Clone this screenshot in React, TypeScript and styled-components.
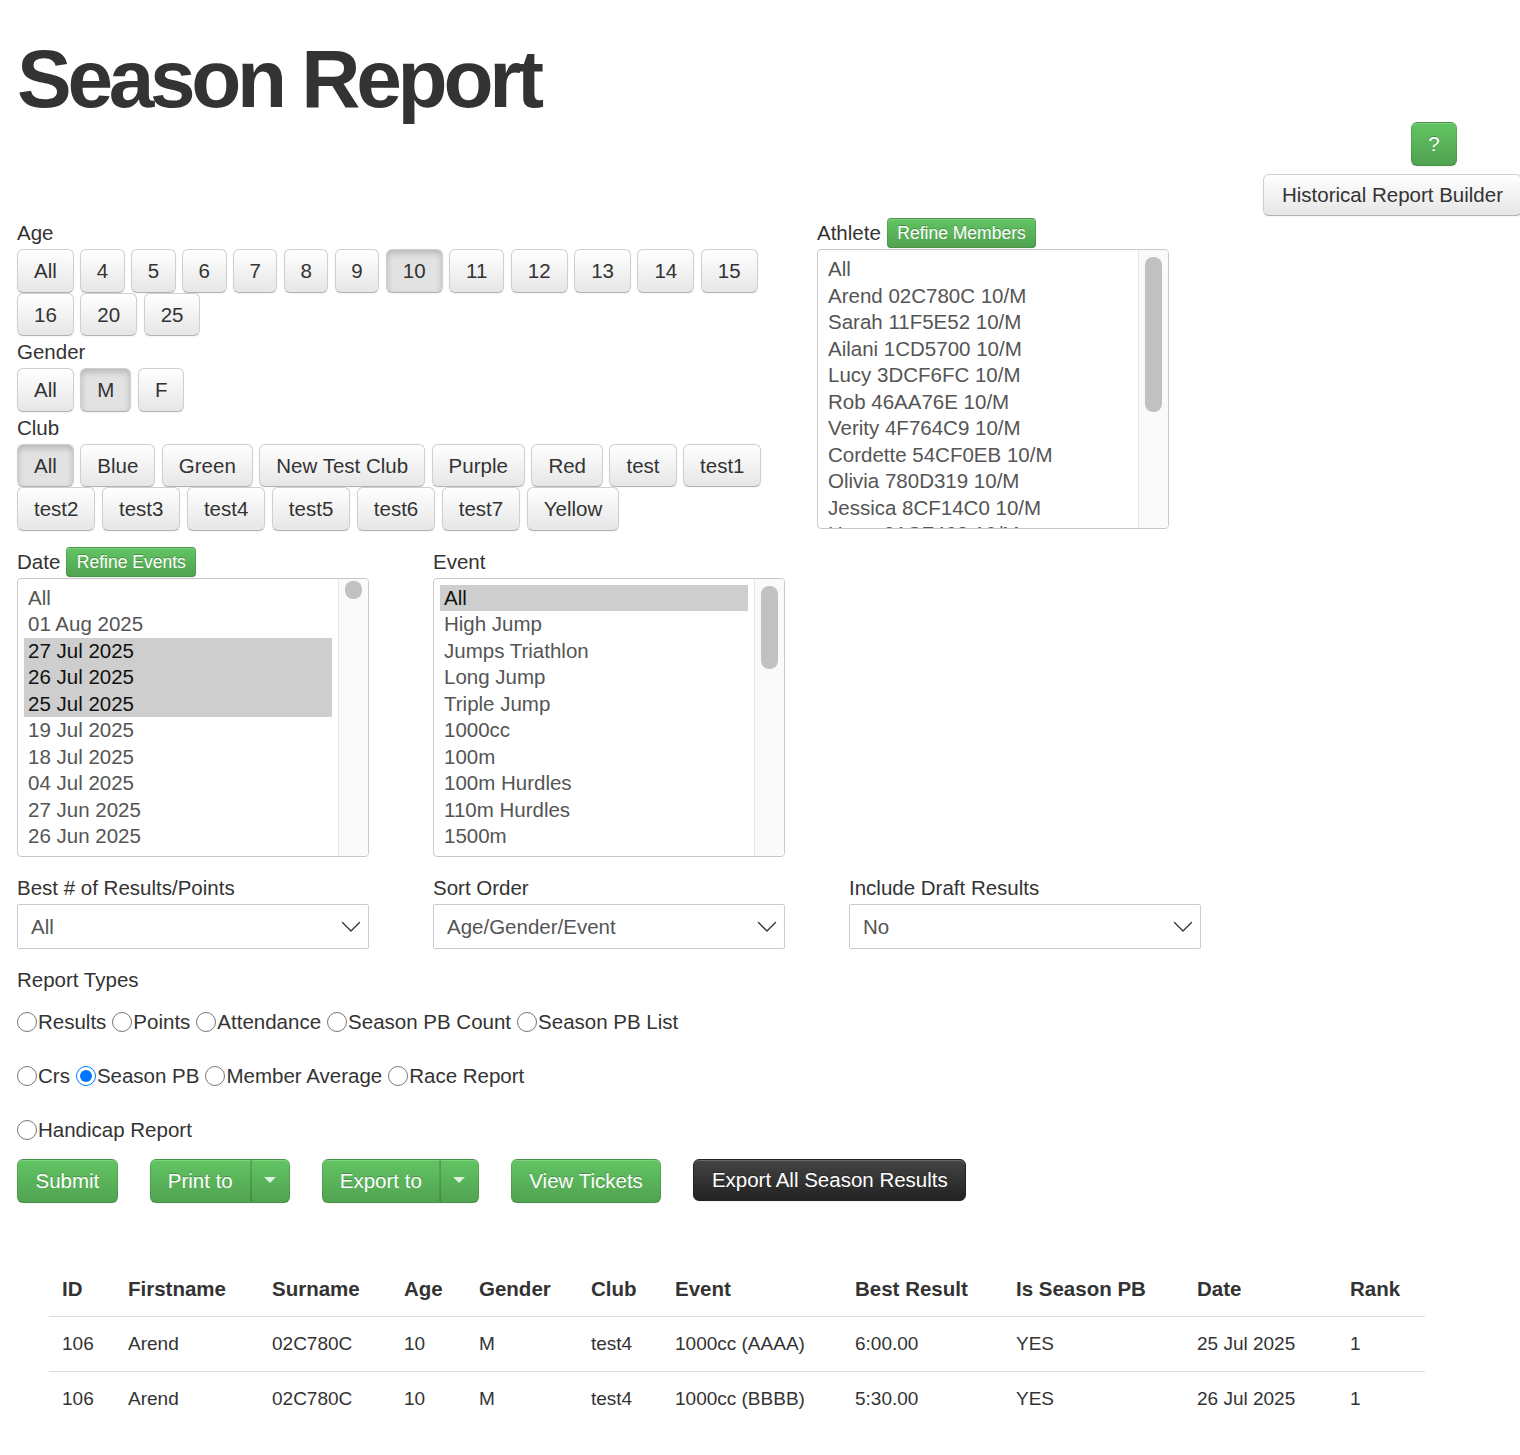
import React from "react";
import styled, { createGlobalStyle, css } from "styled-components";

const GlobalStyle = createGlobalStyle`
  html, body {
    margin: 0;
    padding: 0;
    background: #fff;
    overflow-x: hidden;
  }
  body {
    font-family: "Liberation Sans", Arial, Helvetica, sans-serif;
    font-size: 20.5px;
    color: #333;
  }
  * { box-sizing: border-box; }
`;

const ages = ["All", "4", "5", "6", "7", "8", "9", "10", "11", "12", "13", "14", "15", "16", "20", "25"];
const genders = ["All", "M", "F"];
const clubs = ["All", "Blue", "Green", "New Test Club", "Purple", "Red", "test", "test1", "test2", "test3", "test4", "test5", "test6", "test7", "Yellow"];

const athletes = [
  "All",
  "Arend 02C780C 10/M",
  "Sarah 11F5E52 10/M",
  "Ailani 1CD5700 10/M",
  "Lucy 3DCF6FC 10/M",
  "Rob 46AA76E 10/M",
  "Verity 4F764C9 10/M",
  "Cordette 54CF0EB 10/M",
  "Olivia 780D319 10/M",
  "Jessica 8CF14C0 10/M",
  "Harry 91CF468 10/M",
];

const dates = ["All", "01 Aug 2025", "27 Jul 2025", "26 Jul 2025", "25 Jul 2025", "19 Jul 2025", "18 Jul 2025", "04 Jul 2025", "27 Jun 2025", "26 Jun 2025", "25 Jun 2025"];
const selectedDates = ["27 Jul 2025", "26 Jul 2025", "25 Jul 2025"];

const events = ["All", "High Jump", "Jumps Triathlon", "Long Jump", "Triple Jump", "1000cc", "100m", "100m Hurdles", "110m Hurdles", "1500m", "200m"];

const reportRows = [
  ["Results", "Points", "Attendance", "Season PB Count", "Season PB List"],
  ["Crs", "Season PB", "Member Average", "Race Report"],
  ["Handicap Report"],
];

const columns = [
  { title: "ID", width: 66 },
  { title: "Firstname", width: 144 },
  { title: "Surname", width: 132 },
  { title: "Age", width: 75 },
  { title: "Gender", width: 112 },
  { title: "Club", width: 84 },
  { title: "Event", width: 180 },
  { title: "Best Result", width: 161 },
  { title: "Is Season PB", width: 181 },
  { title: "Date", width: 153 },
  { title: "Rank", width: 88 },
];

const results = [
  ["106", "Arend", "02C780C", "10", "M", "test4", "1000cc (AAAA)", "6:00.00", "YES", "25 Jul 2025", "1"],
  ["106", "Arend", "02C780C", "10", "M", "test4", "1000cc (BBBB)", "5:30.00", "YES", "26 Jul 2025", "1"],
];

const btnBase = css`
  display: inline-flex;
  align-items: center;
  justify-content: center;
  font-family: inherit;
  font-size: 20.5px;
  line-height: 29.5px;
  padding: 6px 16px;
  border-radius: 6px;
  white-space: nowrap;
  cursor: pointer;
`;

const DefaultButton = styled.button<{ $active?: boolean }>`
  ${btnBase}
  color: #333;
  background: linear-gradient(#ffffff, #e6e6e6);
  border: 1px solid #cfcfcf;
  border-bottom-color: #b3b3b3;
  box-shadow: inset 0 1px 0 rgba(255, 255, 255, 0.2), 0 1px 2px rgba(0, 0, 0, 0.05);
  ${(p) =>
    p.$active &&
    css`
      background: #e2e2e2;
      box-shadow: inset 0 3px 6px rgba(0, 0, 0, 0.2), 0 1px 2px rgba(0, 0, 0, 0.05);
    `}
`;

const GreenButton = styled.button`
  ${btnBase}
  color: #fff;
  text-shadow: 0 -1px 0 rgba(0, 0, 0, 0.25);
  background: linear-gradient(#62c462, #51a351);
  border: 1px solid rgba(0, 0, 0, 0.1);
  border-bottom-color: rgba(0, 0, 0, 0.25);
  box-shadow: inset 0 1px 0 rgba(255, 255, 255, 0.2), 0 1px 2px rgba(0, 0, 0, 0.05);
`;

const SmallGreenButton = styled(GreenButton)`
  font-size: 17.5px;
  line-height: 22px;
  height: 30px;
  padding: 0 9.5px;
  border-radius: 4px;
`;

const DarkButton = styled.button`
  ${btnBase}
  padding: 5px 17.5px;
  color: #fff;
  text-shadow: 0 -1px 0 rgba(0, 0, 0, 0.25);
  background: linear-gradient(#444444, #222222);
  border: 1px solid #222;
  box-shadow: inset 0 1px 0 rgba(255, 255, 255, 0.2), 0 1px 2px rgba(0, 0, 0, 0.05);
`;

const Page = styled.div`
  padding-left: 17px;
`;

const Title = styled.h1`
  margin: 0;
  padding-top: 38px;
  font-size: 82px;
  line-height: 82px;
  letter-spacing: -4.3px;
  font-weight: bold;
  color: #333;
`;

const TopRight = styled.div`
  display: flex;
  flex-direction: column;
  align-items: flex-end;
  gap: 8px;
  margin-top: 2px;
`;

const HelpButton = styled(GreenButton)`
  width: 46px;
  height: 44px;
  padding: 0;
  margin-right: 63px;
`;

const HistoricalButton = styled(DefaultButton)`
  height: 42px;
  padding: 0 18px;
  margin-right: -2px;
`;

const FilterRow = styled.div`
  display: flex;
  margin-top: 1px;
`;

const LeftColumn = styled.div`
  width: 775px;
  margin-right: 25px;
`;

const FieldLabel = styled.div`
  display: flex;
  align-items: center;
  gap: 6px;
  height: 32px;
`;

const ButtonWrap = styled.div`
  display: flex;
  flex-wrap: wrap;
  column-gap: 6.5px;
`;

const PillButton = styled(DefaultButton)<{ $compact?: boolean }>`
  height: 43.5px;
  padding: 0 ${(p) => (p.$compact ? 15.5 : 16)}px;
`;

const GridRow = styled.div<{ $mt: number }>`
  display: flex;
  gap: 64px;
  margin-top: ${(p) => p.$mt}px;
`;

const Column = styled.div`
  width: 352px;
`;

const ListBox = styled.div<{ $height: number }>`
  display: flex;
  width: 352px;
  height: ${(p) => p.$height}px;
  border: 1px solid #c8c8c8;
  border-radius: 4px;
  overflow: hidden;
  background: #fff;
`;

const Options = styled.div`
  flex: 1;
  padding: 6px 6px 0 6px;
  overflow: hidden;
`;

const Option = styled.div<{ $selected?: boolean }>`
  height: 26.5px;
  line-height: 26.5px;
  padding-left: 4px;
  white-space: nowrap;
  color: ${(p) => (p.$selected ? "#111" : "#555")};
  background: ${(p) => (p.$selected ? "#cecece" : "transparent")};
`;

const Track = styled.div`
  width: 30px;
  border-left: 1px solid #e6e6e6;
  background: #fafafa;
  padding: 0 6px;
`;

const Thumb = styled.div<{ $top: number; $height: number }>`
  margin-top: ${(p) => p.$top}px;
  height: ${(p) => p.$height}px;
  border-radius: 8px;
  background: #c1c1c1;
`;

const SelectBox = styled.div`
  display: flex;
  align-items: center;
  justify-content: space-between;
  width: 352px;
  height: 45px;
  border: 1px solid #cccccc;
  border-radius: 2px;
  padding: 2px 7px 0 13px;
  color: #555;
  background: #fff;
`;

const Section = styled.div<{ $mt: number }>`
  margin-top: ${(p) => p.$mt}px;
`;

const RadioRows = styled.div`
  display: flex;
  flex-direction: column;
  gap: 24px;
  margin-top: 11px;
`;

const RadioRow = styled.div`
  display: flex;
  align-items: center;
  height: 30px;
  gap: 6px;
`;

const RadioLabel = styled.label`
  display: inline-flex;
  align-items: center;
  color: #333;
  white-space: nowrap;
`;

const Radio = styled.input`
  width: 20px;
  height: 20px;
  margin: 0 1px 0 0;
`;

const ActionRow = styled.div`
  display: flex;
  align-items: flex-start;
  gap: 32px;
  margin-top: 14px;
`;

const Split = styled.div`
  display: flex;
`;

const SplitMain = styled(GreenButton)`
  height: 44px;
  padding: 0 17px;
  border-radius: 6px 0 0 6px;
`;

const SplitCaret = styled(GreenButton)`
  height: 44px;
  width: 39px;
  padding: 0;
  border-left: 1px solid rgba(0, 0, 0, 0.15);
  border-radius: 0 6px 6px 0;
`;

const Caret = styled.span`
  width: 0;
  height: 0;
  border-top: 6px solid rgba(255, 255, 255, 0.8);
  border-left: 6px solid transparent;
  border-right: 6px solid transparent;
  margin-top: -2px;
`;

const ActionButton = styled(GreenButton)`
  height: 44px;
  padding: 0 17.5px;
`;

const ExportAllButton = styled(DarkButton)`
  height: 42px;
`;

const ResultsTable = styled.table`
  margin-top: 59px;
  margin-left: 32px;
  width: 1376px;
  border-collapse: collapse;
  table-layout: fixed;
`;

const HeadCell = styled.th`
  text-align: left;
  font-size: 20.5px;
  font-weight: bold;
  line-height: 29px;
  padding: 12.5px 13px;
  color: #333;
  white-space: nowrap;
`;

const BodyCell = styled.td`
  font-size: 19px;
  line-height: 29px;
  padding: 12.5px 13px;
  border-top: 1px solid #dddddd;
  color: #333;
  white-space: nowrap;
`;

const Chevron = () => (
  <svg width="20" height="12" viewBox="0 0 20 12" fill="none">
    <path d="M1.5 1.5 L10 10 L18.5 1.5" stroke="#333" strokeWidth="1.4" strokeLinecap="round" strokeLinejoin="round" />
  </svg>
);

const Select = ({ value }: { value: string }) => (
  <SelectBox>
    <span>{value}</span>
    <Chevron />
  </SelectBox>
);

const List = ({
  items,
  selected,
  height,
  thumbTop,
  thumbHeight,
}: {
  items: string[];
  selected: string[];
  height: number;
  thumbTop: number;
  thumbHeight: number;
}) => (
  <ListBox $height={height}>
    <Options>
      {items.map((item) => (
        <Option key={item} $selected={selected.includes(item)}>
          {item}
        </Option>
      ))}
    </Options>
    <Track>
      <Thumb $top={thumbTop} $height={thumbHeight} />
    </Track>
  </ListBox>
);

const App = () => (
  <Page>
    <GlobalStyle />
    <Title>Season Report</Title>
    <TopRight>
      <HelpButton>?</HelpButton>
      <HistoricalButton>Historical Report Builder</HistoricalButton>
    </TopRight>

    <FilterRow>
      <LeftColumn>
        <FieldLabel>Age</FieldLabel>
        <ButtonWrap>
          {ages.map((a) => (
            <PillButton key={a} $active={a === "10"} $compact={/^\d$/.test(a)}>
              {a}
            </PillButton>
          ))}
        </ButtonWrap>
        <FieldLabel>Gender</FieldLabel>
        <ButtonWrap>
          {genders.map((g) => (
            <PillButton key={g} $active={g === "M"}>
              {g}
            </PillButton>
          ))}
        </ButtonWrap>
        <FieldLabel>Club</FieldLabel>
        <ButtonWrap>
          {clubs.map((c) => (
            <PillButton key={c} $active={c === "All"}>
              {c}
            </PillButton>
          ))}
        </ButtonWrap>
      </LeftColumn>
      <div>
        <FieldLabel>
          Athlete <SmallGreenButton>Refine Members</SmallGreenButton>
        </FieldLabel>
        <List items={athletes} selected={[]} height={280} thumbTop={7} thumbHeight={155} />
      </div>
    </FilterRow>

    <GridRow $mt={15}>
      <Column>
        <FieldLabel>
          Date <SmallGreenButton>Refine Events</SmallGreenButton>
        </FieldLabel>
        <List items={dates} selected={selectedDates} height={279} thumbTop={2} thumbHeight={18} />
      </Column>
      <Column>
        <FieldLabel>Event</FieldLabel>
        <List items={events} selected={["All"]} height={279} thumbTop={7} thumbHeight={83} />
      </Column>
    </GridRow>

    <GridRow $mt={15}>
      <Column>
        <FieldLabel>Best # of Results/Points</FieldLabel>
        <Select value="All" />
      </Column>
      <Column>
        <FieldLabel>Sort Order</FieldLabel>
        <Select value="Age/Gender/Event" />
      </Column>
      <Column>
        <FieldLabel>Include Draft Results</FieldLabel>
        <Select value="No" />
      </Column>
    </GridRow>

    <Section $mt={15}>
      <FieldLabel>Report Types</FieldLabel>
      <RadioRows>
        {reportRows.map((row, i) => (
          <RadioRow key={i}>
            {row.map((r) => (
              <RadioLabel key={r}>
                <Radio type="radio" name="reportType" defaultChecked={r === "Season PB"} />
                {r}
              </RadioLabel>
            ))}
          </RadioRow>
        ))}
      </RadioRows>
    </Section>

    <ActionRow>
      <ActionButton>Submit</ActionButton>
      <Split>
        <SplitMain>Print to</SplitMain>
        <SplitCaret>
          <Caret />
        </SplitCaret>
      </Split>
      <Split>
        <SplitMain>Export to</SplitMain>
        <SplitCaret>
          <Caret />
        </SplitCaret>
      </Split>
      <ActionButton>View Tickets</ActionButton>
      <ExportAllButton>Export All Season Results</ExportAllButton>
    </ActionRow>

    <ResultsTable>
      <colgroup>
        {columns.map((c) => (
          <col key={c.title} style={{ width: c.width }} />
        ))}
      </colgroup>
      <thead>
        <tr>
          {columns.map((c) => (
            <HeadCell key={c.title}>{c.title}</HeadCell>
          ))}
        </tr>
      </thead>
      <tbody>
        {results.map((row, i) => (
          <tr key={i}>
            {row.map((cell, j) => (
              <BodyCell key={j}>{cell}</BodyCell>
            ))}
          </tr>
        ))}
      </tbody>
    </ResultsTable>
  </Page>
);

export default App;
